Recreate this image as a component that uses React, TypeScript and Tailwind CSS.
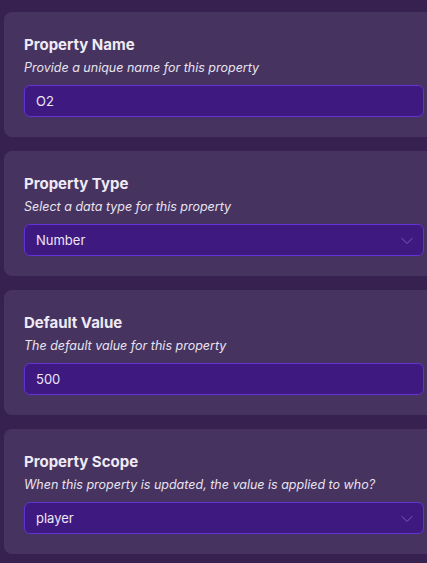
import { ChevronDown } from 'lucide-react';

type Field = {
  title: string;
  hint: string;
  value: string;
  select?: boolean;
};

const fields: Field[] = [
  { title: 'Property Name', hint: 'Provide a unique name for this property', value: 'O2' },
  { title: 'Property Type', hint: 'Select a data type for this property', value: 'Number', select: true },
  { title: 'Default Value', hint: 'The default value for this property', value: '500' },
  {
    title: 'Property Scope',
    hint: 'When this property is updated, the value is applied to who?',
    value: 'player',
    select: true,
  },
];

function FieldCard({ field }: { field: Field }) {
  return (
    <section className="-mr-3 rounded-lg bg-[#46335f] pt-[21px] pb-[20px] pl-5 pr-[16px]">
      <h2 className="text-[15px] leading-6 font-bold text-[#efeaf5]">{field.title}</h2>
      <p className="mt-[2px] text-[12.5px] leading-[18px] italic text-[#e8e3ef]">{field.hint}</p>
      <div className="mt-[8px] flex h-[32px] w-[400px] items-center justify-between rounded-md border border-[#6233d4] bg-[#3e1a80] pt-[1px] pl-[11px] pr-[6px] text-[13px] text-[#ece6f7]">
        <span>{field.value}</span>
        {field.select && <ChevronDown size={20} strokeWidth={1.2} className="text-[#7a5cb6]" aria-hidden="true" />}
      </div>
    </section>
  );
}

export default function App() {
  return (
    <main
      className="h-[563px] w-[427px] overflow-hidden bg-[#362150] pt-3 pl-1"
      style={{ fontFamily: 'Inter, "Noto Sans", sans-serif' }}
    >
      <div className="flex flex-col gap-[14px]">
        {fields.map((f) => (
          <FieldCard key={f.title} field={f} />
        ))}
      </div>
    </main>
  );
}
